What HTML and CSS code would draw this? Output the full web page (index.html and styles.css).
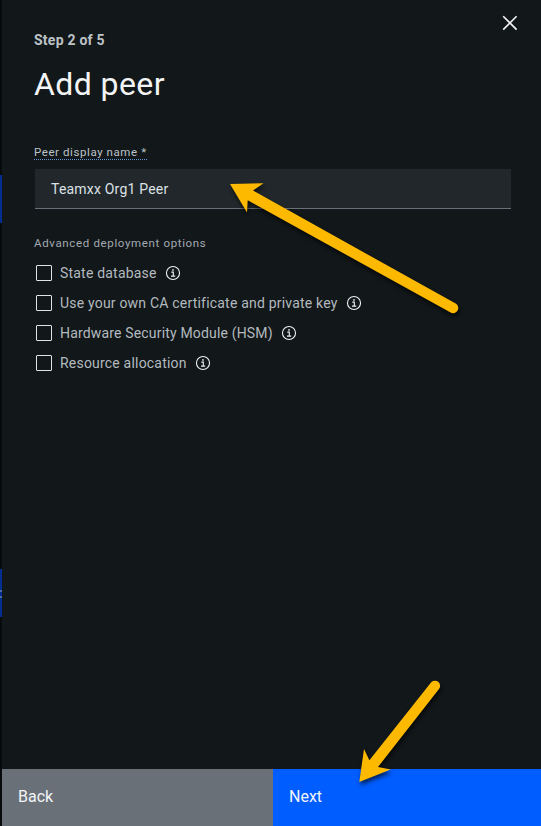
FILE: index.html
```html
<!DOCTYPE html>
<html lang="en">
<head>
<meta charset="utf-8">
<title>Add peer</title>
<link rel="stylesheet" href="styles.css">
</head>
<body>
<svg class="defs" width="0" height="0" aria-hidden="true">
  <symbol id="info" viewBox="0 0 16 16">
    <circle cx="8" cy="8" r="6.55" fill="none" stroke="currentColor" stroke-width="1.1"/>
    <path d="M6.3 7.1h2v3.8M6 11.1h4.2" fill="none" stroke="currentColor" stroke-width="1.1"/>
    <circle cx="8" cy="4.9" r=".85" fill="currentColor"/>
  </symbol>
</svg>
<div class="app">
  <div class="backdrop"><i class="strip first"></i><i class="strip second"></i></div>
  <main class="panel">
    <button class="close" aria-label="Close"><svg width="16" height="16" viewBox="0 0 16 16"><path d="M1.2 1.2l13.4 13.4M14.6 1.2L1.2 14.6" stroke="#f3f3f3" stroke-width="1.6"/></svg></button>
    <div class="content">
      <div class="step"><span>Step 2 of 5</span></div>
      <h1 class="title"><span>Add peer</span></h1>
      <div class="field-label"><span>Peer display name *</span></div>
      <div class="field"><span>Teamxx Org1 Peer</span></div>
      <div class="section-label"><span>Advanced deployment options</span></div>
      <ul class="options">
        <li><i class="box"></i><span>State database</span><svg class="info"><use href="#info"/></svg></li>
        <li><i class="box"></i><span>Use your own CA certificate and private key</span><svg class="info"><use href="#info"/></svg></li>
        <li><i class="box"></i><span class="tight">Hardware Security Module (HSM)</span><svg class="info"><use href="#info"/></svg></li>
        <li><i class="box"></i><span>Resource allocation</span><svg class="info"><use href="#info"/></svg></li>
      </ul>
    </div>
    <footer class="actions">
      <button class="back">Back</button>
      <button class="next">Next</button>
    </footer>
  </main>
  <svg class="arrows" width="541" height="826" viewBox="0 0 541 826" aria-hidden="true">
    <g fill="#fdb900">
      <path d="M230 184L263.5 183.2L253 190.6L455.7 303.6A5.1 5.1 0 0 1 450.6 312.5L247.7 200.3L247 212.5Z"/>
      <path d="M359.3 782L364 749L369.4 760.3L431 682.6A5.1 5.1 0 0 1 439 689L378 767L390.7 769.4Z"/>
    </g>
  </svg>
</div>
</body>
</html>
```
FILE: styles.css
```css
* { box-sizing: border-box; }
body { margin: 0; background: #12171a; font-family: Roboto, "Liberation Sans", sans-serif; }
.defs { position: absolute; }
.app { position: relative; display: flex; width: 541px; height: 826px; overflow: hidden; }
.backdrop { width: 2px; background: #080b0d; display: flex; flex-direction: column; }
.strip { height: 48px; background: #002f91; }
.first { margin-top: 175px; }
.second { margin-top: 346px; background: linear-gradient(#002f91 21px, #506ba6 21px 23px, #002f91 23px 27px, #506ba6 27px 29px, #002f91 29px); }
.panel { position: relative; flex: 1; display: flex; flex-direction: column; background: #12171a; }
button { border: 0; padding: 0; font: inherit; text-align: left; }
.close { position: absolute; top: 15px; right: 23px; width: 16px; height: 16px; background: none; }
.close svg { display: block; }
.content { flex: 1; padding: 31px 30px 0 32px; }
.step { font-size: 14px; line-height: 18px; font-weight: 700; color: #bdc3c7; letter-spacing: .24px; }
.title { margin: 15px 0 0; font-size: 32px; line-height: 40px; font-weight: 400; color: #f3f4f5; letter-spacing: .42px; }
.field-label { margin-top: 40px; height: 16px; font-size: 11.5px; line-height: 17px; color: #bdc3c7; letter-spacing: .58px; }
.field-label span { display: inline-block; height: 16px; border-bottom: 1px dotted #6395d6; }
.field { margin: 9px 0 0 1px; height: 40px; padding-left: 16px; background: #21272a; border-bottom: 1px solid #697077; font-size: 14px; line-height: 40px; color: #dde1e6; letter-spacing: .2px; }
.section-label { margin-top: 26px; font-size: 11.5px; line-height: 17px; color: #a2a9b0; letter-spacing: .65px; }
.options { list-style: none; margin: 6px 0 0; padding: 0; }
.options li { display: flex; align-items: center; height: 30px; padding-left: 2px; font-size: 14px; color: #b3babf; letter-spacing: .2px; }
.box { width: 16px; height: 16px; border: 1px solid #e0e3e5; border-radius: 1px; margin-right: 8px; }
.tight { letter-spacing: .17px; }
.info { width: 16px; height: 16px; margin-left: 8px; color: #f0f2f3; }
.actions { display: flex; height: 57px; font-size: 16px; line-height: 56px; }
.actions button { padding-left: 16px; height: 57px; padding-bottom: 1px; color: #f2f4f8; }
.back { width: 271px; background: #697077; }
.next { flex: 1; background: #005dff; }
.arrows { position: absolute; left: 0; top: 0; pointer-events: none; filter: drop-shadow(1px 3px 2px rgba(0, 0, 0, .65)); }
```
